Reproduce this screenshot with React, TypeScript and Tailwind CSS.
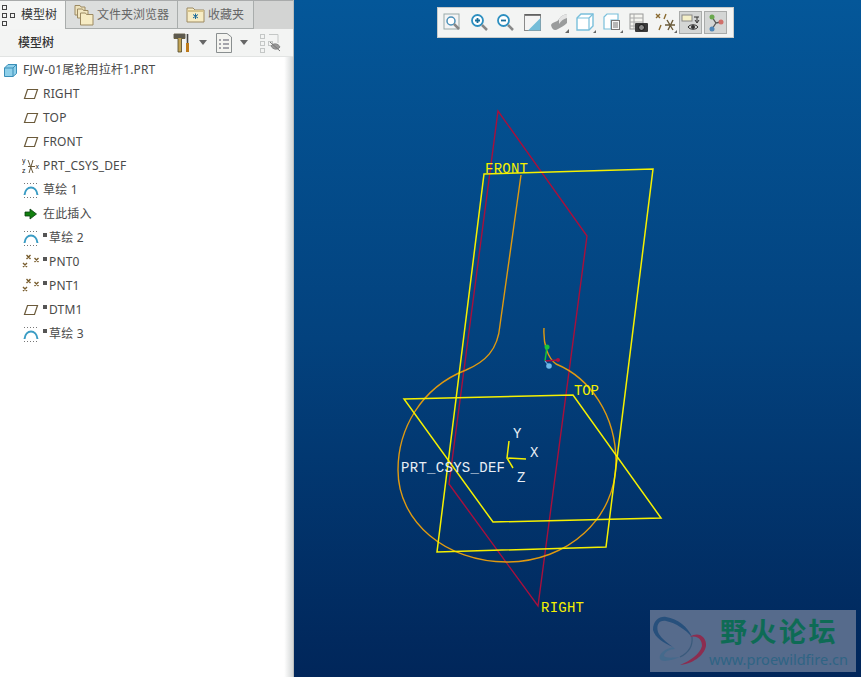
const cjk = "font-['Noto_Sans','Noto_Sans_CJK_SC',sans-serif]";

const DatumPlane = () => (
  <svg width="16" height="12" viewBox="0 0 16 12" fill="none">
    <path d="M4.5 1.5H14.5L11.5 10.5H1.5Z" stroke="#6b5a3a" strokeWidth="1.2" />
  </svg>
);

const Csys = () => (
  <svg width="18" height="18" viewBox="0 0 18 18" fill="none" stroke="#6b5a3a">
    <path d="M6 3L11 16M11 3L7 16M6 9.5H13" />
    <text x="0" y="6" fontSize="7" fill="#222" stroke="none" fontFamily="Liberation Sans">y</text>
    <text x="0" y="16" fontSize="7" fill="#222" stroke="none" fontFamily="Liberation Sans">z</text>
    <text x="13.5" y="11.5" fontSize="7" fill="#222" stroke="none" fontFamily="Liberation Sans">x</text>
  </svg>
);

const Sketch = () => (
  <svg width="16" height="16" viewBox="0 0 16 16" fill="none">
    <path d="M1.5 13C2 8 5 5.5 8 5.5S14 8 14.5 13" stroke="#3a9cc4" strokeWidth="2" />
    <path d="M1 1.5H15M1 15.5H15" stroke="#777" strokeDasharray="1 2" />
  </svg>
);

const Points = () => (
  <svg width="18" height="16" viewBox="0 0 18 16" fill="none" stroke="#7a5f30" strokeWidth="1.4">
    <path d="M4.5 1L8.5 5M8.5 1L4.5 5M12.5 4L16.5 8M16.5 4L12.5 8M1 9L5 13M5 9L1 13" />
  </svg>
);

const Insert = () => (
  <svg width="14" height="12" viewBox="0 0 14 12">
    <path d="M1 4H6V1L12.5 6L6 11V8H1Z" fill="#12800f" stroke="#0a3d10" strokeWidth="0.8" />
  </svg>
);

const Part = () => (
  <svg width="15" height="15" viewBox="0 0 15 15">
    <path d="M1.5 5L5 1.5H13.5V10.5L10 13.5H1.5Z" fill="#8fd0ea" stroke="#3a8fb8" />
    <path d="M1.5 5H10V13.5M10 5L13.5 1.5" fill="none" stroke="#3a8fb8" />
  </svg>
);

const TreeIcon = ({ color = "#444" }: { color?: string }) => (
  <svg width="16" height="24" viewBox="0 0 16 24" fill="none" stroke={color}>
    <rect x="1.5" y="2.5" width="4" height="4" />
    <rect x="1.5" y="10.5" width="4" height="4" />
    <rect x="9.5" y="10.5" width="4" height="4" />
    <rect x="1.5" y="18.5" width="4" height="4" />
  </svg>
);

const FolderStack = () => (
  <svg width="20" height="22" viewBox="0 0 20 22">
    <path d="M1 1.5H6L7 3H11V11H1Z" fill="#eee3bd" stroke="#9c8a62" />
    <path d="M3.5 5H8.5L9.5 6.5H14V14H3.5Z" fill="#f2e7c2" stroke="#9c8a62" />
    <path d="M6.5 9H11.5L12.5 10.5H19V21H6.5Z" fill="#f7ecc4" stroke="#9c8a62" />
  </svg>
);

const StarFolder = () => (
  <svg width="20" height="20" viewBox="0 0 20 20">
    <path d="M1 17V3H7L9 5H18V17Z" fill="#f7ecc4" stroke="#9c8a62" />
    <path d="M1.5 5H17.5V7H1.5Z" fill="#d8c48c" />
    <path d="M9.5 8.5V14M7 9.5L12 13M12 9.5L7 13" stroke="#1c6a9a" strokeWidth="1" />
  </svg>
);

const treeRows = [
  { icon: <DatumPlane />, label: "RIGHT" },
  { icon: <DatumPlane />, label: "TOP" },
  { icon: <DatumPlane />, label: "FRONT" },
  { icon: <Csys />, label: "PRT_CSYS_DEF" },
  { icon: <Sketch />, label: "草绘 1" },
  { icon: <Insert />, label: "在此插入" },
  { icon: <Sketch />, label: "草绘 2", mark: true },
  { icon: <Points />, label: "PNT0", mark: true },
  { icon: <Points />, label: "PNT1", mark: true },
  { icon: <DatumPlane />, label: "DTM1", mark: true },
  { icon: <Sketch />, label: "草绘 3", mark: true },
];

const Sidebar = () => (
  <aside className={`flex h-full w-[294px] shrink-0 flex-col border-r border-[#b9bcbc] bg-white text-xs text-[#4a4a4a] ${cjk}`}>
    <div className="flex h-[29px] shrink-0 items-end border-t border-[#a9abab] bg-[#d3d4d3]">
      <div className="flex h-[28px] w-[65px] items-center gap-[4px] bg-[#f4f5f4] pl-[1px] text-[#333]">
        <TreeIcon />
        <span>模型树</span>
      </div>
      <div className="flex h-[28px] w-[113px] items-center gap-[3px] border border-t-0 border-[#a9adac] bg-[#dcdedd] pl-[8px] text-[#666]">
        <FolderStack />
        <span>文件夹浏览器</span>
      </div>
      <div className="flex h-[28px] w-[76px] items-center gap-[2px] border border-t-0 border-l-0 border-[#a9adac] bg-[#dcdedd] pl-[8px] text-[#666]">
        <StarFolder />
        <span>收藏夹</span>
      </div>
    </div>
    <div className="flex h-[28px] shrink-0 items-center border-b border-[#e2e4e3] bg-[#f3f4f3] pl-[18px]">
      <span className="w-[155px] font-medium text-[#333]">模型树</span>
      <svg width="18" height="20" viewBox="0 0 18 20">
        <path d="M1 1H12V5.5H8.5V19H5V5.5H1Z" fill="#c2a456" stroke="#4f4628" strokeWidth="0.8" />
        <path d="M1 1H12V5H1Z" fill="#5d5a4e" />
        <path d="M14.5 1V10" stroke="#444" strokeWidth="1.6" />
        <path d="M14.5 10V19" stroke="#bd7a1a" strokeWidth="3" />
      </svg>
      <svg className="ml-[8px]" width="8" height="5" viewBox="0 0 8 5">
        <path d="M0 0H8L4 5Z" fill="#666" />
      </svg>
      <svg className="ml-[9px]" width="16" height="20" viewBox="0 0 16 20" fill="none">
        <path d="M0.5 0.5H11L15.5 4V19.5H0.5Z" fill="#f4f4f0" stroke="#8a8f90" />
        <path d="M3 7H5M3 11H5M3 15H5M7 7H13M7 11H13M7 15H13" stroke="#556" />
      </svg>
      <svg className="ml-[8px]" width="8" height="5" viewBox="0 0 8 5">
        <path d="M0 0H8L4 5Z" fill="#666" />
      </svg>
      <svg className="ml-[11px]" width="22" height="20" viewBox="0 0 22 20" fill="none" stroke="#c4c7c6">
        <rect x="1.5" y="1.5" width="4" height="4" />
        <rect x="1.5" y="8.5" width="4" height="4" />
        <rect x="1.5" y="15.5" width="4" height="4" />
        <rect x="9.5" y="8.5" width="4" height="4" />
        <path d="M10 1.5H19V10" />
        <path d="M12 13C14 10 19 10 21 14C19 17 14 17 12 13Z" fill="#999" stroke="#888" />
        <path d="M11 9L21 18" stroke="#777" />
      </svg>
    </div>
    <div className="flex flex-1 flex-col bg-gradient-to-r from-white from-[97%] to-[#d4d7d7] pt-[1px] tracking-[0.17px]">
      <div className="flex h-[24px] items-center gap-[5px] pl-[3px]">
        <Part />
        <span>FJW-01尾轮用拉杆1.PRT</span>
      </div>
      {treeRows.map((row) => (
        <div key={row.label} className="flex h-[24px] items-center">
          <span className="flex w-[43px] justify-end pr-[3px] pl-[22px]">
            <span className="flex w-[18px] justify-center">{row.icon}</span>
          </span>
          {row.mark && <span className="mr-[2px] mb-[6px] h-[4px] w-[4px] bg-[#555]" />}
          <span>{row.label}</span>
        </div>
      ))}
    </div>
  </aside>
);

const toolbarIcons = [
  <svg key="a" width="20" height="20" viewBox="0 0 20 20" fill="none">
    <rect x="1" y="1" width="15" height="15" fill="#f4f4f4" stroke="#9aa" />
    <circle cx="8" cy="8" r="4" stroke="#4a90b8" strokeWidth="1.5" fill="#fff" />
    <path d="M11 11L16 16" stroke="#888" strokeWidth="2.5" />
  </svg>,
  <svg key="b" width="20" height="20" viewBox="0 0 20 20" fill="none">
    <circle cx="7.5" cy="7.5" r="5.5" stroke="#2d8fc0" strokeWidth="1.8" fill="#fff" />
    <path d="M5 7.5H10M7.5 5V10" stroke="#1a6e9a" strokeWidth="1.8" />
    <path d="M12 12L17 17" stroke="#888" strokeWidth="2.5" />
  </svg>,
  <svg key="c" width="20" height="20" viewBox="0 0 20 20" fill="none">
    <circle cx="7.5" cy="7.5" r="5.5" stroke="#2d8fc0" strokeWidth="1.8" fill="#fff" />
    <path d="M5 7.5H10" stroke="#1a6e9a" strokeWidth="1.8" />
    <path d="M12 12L17 17" stroke="#888" strokeWidth="2.5" />
  </svg>,
  <svg key="d" width="18" height="18" viewBox="0 0 18 18">
    <rect x="0.5" y="0.5" width="16" height="16" fill="#f4f4f4" stroke="#8a8a8a" />
    <path d="M16.5 4V16.5H4Z" fill="#74bcd8" />
    <path d="M1 1H16.5" stroke="#555" strokeWidth="1.5" />
  </svg>,
  <svg key="e" width="20" height="20" viewBox="0 0 20 20">
    <path d="M1 12C3 8 7 10 9 6C11 3 13 2 17 1V10C14 13 11 14 8 16C5 18 2 17 1 12Z" fill="#9a9c9c" />
    <path d="M9 6C11 3 13 2 17 1V5C13 6 11 8 9 11Z" fill="#e4e4e4" />
    <path d="M15 20H19V16Z" fill="#666" />
  </svg>,
  <svg key="f" width="20" height="20" viewBox="0 0 20 20">
    <path d="M1 5L5 1H17V13L13 17H1Z" fill="#fff" stroke="#79bfdb" strokeWidth="1.4" />
    <path d="M1 5H13V17M13 5L17 1" fill="none" stroke="#79bfdb" strokeWidth="1.2" />
    <path d="M17 20H20V17Z" fill="#666" />
  </svg>,
  <svg key="g" width="20" height="20" viewBox="0 0 20 20">
    <path d="M1 4L4 1H15V7H8V16H1Z" fill="#fff" stroke="#79bfdb" strokeWidth="1.2" />
    <rect x="8.5" y="7.5" width="8" height="9" fill="#f7f7f7" stroke="#777" />
    <path d="M10 10H15M10 12H15M10 14H15" stroke="#777" />
    <path d="M17 20H20V17Z" fill="#666" />
  </svg>,
  <svg key="h" width="20" height="20" viewBox="0 0 20 20">
    <rect x="1" y="1" width="13" height="15" fill="#f5f5f0" stroke="#999" />
    <path d="M1 5H14M1 9H14M1 13H14M5 1V16" stroke="#aaa" />
    <rect x="6" y="10" width="13" height="9" rx="1" fill="#3a3a3a" />
    <circle cx="12.5" cy="14.5" r="3" fill="#888" stroke="#111" />
  </svg>,
  <svg key="i" width="22" height="20" viewBox="0 0 22 20" fill="none" stroke="#8a6a30" strokeWidth="1.4">
    <path d="M1 1L5 5M5 1L1 5M11 1L9 6M6 12L4 17" />
    <path d="M12 7L18 17M18 7L13 17M10 12H20" stroke="#6a5a3a" />
    <path d="M19 20H22V17Z" fill="#666" stroke="none" />
  </svg>,
];

const Toolbar = () => (
  <div className="absolute top-[7px] left-[143px] flex h-[31px] w-[297px] items-center border border-[#c9cbca] bg-[#f3f4f3] pl-[2px]">
    {toolbarIcons.map((icon, i) => (
      <span key={i} className="flex h-[24px] w-[26.6px] items-center justify-center">
        {icon}
      </span>
    ))}
    <span className="flex h-[23px] w-[23px] items-center justify-center border border-[#a9abaa] bg-[#d4d6d5]">
      <svg width="20" height="18" viewBox="0 0 20 18" fill="none">
        <rect x="1" y="1" width="10" height="6" fill="#f4efc8" stroke="#888" />
        <path d="M13 3H18M16 3V8M14 6L16 9L18 6" stroke="#333" />
        <path d="M7 13C9 10 15 10 17 13C15 16 9 16 7 13Z" stroke="#333" />
        <circle cx="12" cy="13" r="2" fill="#333" />
      </svg>
    </span>
    <span className="ml-[2px] flex h-[23px] w-[23px] items-center justify-center border border-[#a9abaa] bg-[#d4d6d5]">
      <svg width="18" height="18" viewBox="0 0 18 18" fill="none">
        <path d="M5 3L9 9L14 8M9 9L5 15" stroke="#555" strokeWidth="1.3" />
        <circle cx="5" cy="3" r="2.5" fill="#6aa84f" />
        <circle cx="14" cy="8" r="2.5" fill="#d0706a" />
        <circle cx="5" cy="15" r="2.5" fill="#4d86b8" />
      </svg>
    </span>
  </div>
);

const Model = () => (
  <svg className="absolute inset-0" width="567" height="677" viewBox="294 0 567 677" fill="none">
    <path d="M498 111L587 236L538 606L449 484Z" stroke="#a8103c" strokeWidth="1.4" />
    <path d="M521 175L500 325C498 350 485 362 466 370C420 388 398 430 398 470C398 522 446 562 507 562C568 562 616 518 616 462C616 415 590 378 556 364C548 358 543 345 544 328" stroke="#e09a10" strokeWidth="1.4" />
    <path d="M484 174L653 169L606 547L437 552Z" stroke="#f5f000" strokeWidth="1.5" />
    <path d="M404 399L573 395L661 518L493 522Z" stroke="#f5f000" strokeWidth="1.5" />
    <path d="M545 361L547 347" stroke="#18c43a" strokeWidth="1.5" />
    <path d="M545 361L558 360" stroke="#b01040" strokeWidth="1.5" />
    <path d="M545 361L549 366" stroke="#6fb8e8" strokeWidth="1.2" />
    <circle cx="547" cy="347" r="2.5" fill="#18c43a" />
    <circle cx="558" cy="360" r="2" fill="#b01040" />
    <circle cx="549" cy="366" r="2.8" fill="#6fb8e8" />
    <path d="M509 441L507 458L526 459M507 458L513 468" stroke="#f5f000" strokeWidth="1.5" />
    <g fontFamily="Liberation Mono, monospace" fontSize="14">
      <text x="485" y="173" fill="#f5f000" textLength="43">FRONT</text>
      <text x="574" y="395" fill="#f5f000" textLength="25">TOP</text>
      <text x="541" y="612" fill="#f5f000" textLength="43">RIGHT</text>
      <text x="401" y="472" fill="#e8eef5" textLength="104">PRT_CSYS_DEF</text>
      <text x="513" y="438" fill="#e8eef5">Y</text>
      <text x="530" y="457" fill="#e8eef5">X</text>
      <text x="517" y="482" fill="#e8eef5">Z</text>
    </g>
  </svg>
);

const Watermark = () => (
  <div className="absolute top-[610px] left-[356px] flex h-[62px] w-[206px] items-center bg-[#566b8c]">
    <svg className="shrink-0" width="59" height="62" viewBox="0 0 59 62" fill="none">
      <path d="M3 20C3 10 10 6 16 7C28 9 38 17 42 27C36 20 26 13 16 11C9 10 6 15 8 22C10 27 16 32 23 37C14 33 5 28 3 20Z" fill="#27507c" />
      <path d="M23 37C15 39 8 44 10 49C13 53 22 50 30 47C22 48 15 48 14 46C14 42 20 39 25 39Z" fill="#456a8c" />
      <path d="M30 55C42 54 54 46 56 36C57 27 48 21 40 27C47 25 52 29 52 36C50 44 40 51 30 55Z" fill="#8c2d50" />
      <path d="M42 27C43 36 38 43 30 47" stroke="#3a5a7c" strokeWidth="1.2" />
    </svg>
    <div className={`flex flex-col ${cjk}`}>
      <span className="pl-[11px] text-[27px] leading-[36px] font-bold tracking-[2.5px] text-[#0e6b55]">野火论坛</span>
      <span className="text-[14.5px] leading-[18px] text-[#2f6484]">www.proewildfire.cn</span>
    </div>
  </div>
);

export default function App() {
  return (
    <div className="flex h-[677px] w-[861px] overflow-hidden bg-white">
      <Sidebar />
      <main className="relative h-full flex-1 bg-gradient-to-b from-[#045799] via-[#03427e] to-[#01265a]">
        <Model />
        <Toolbar />
        <Watermark />
      </main>
    </div>
  );
}
